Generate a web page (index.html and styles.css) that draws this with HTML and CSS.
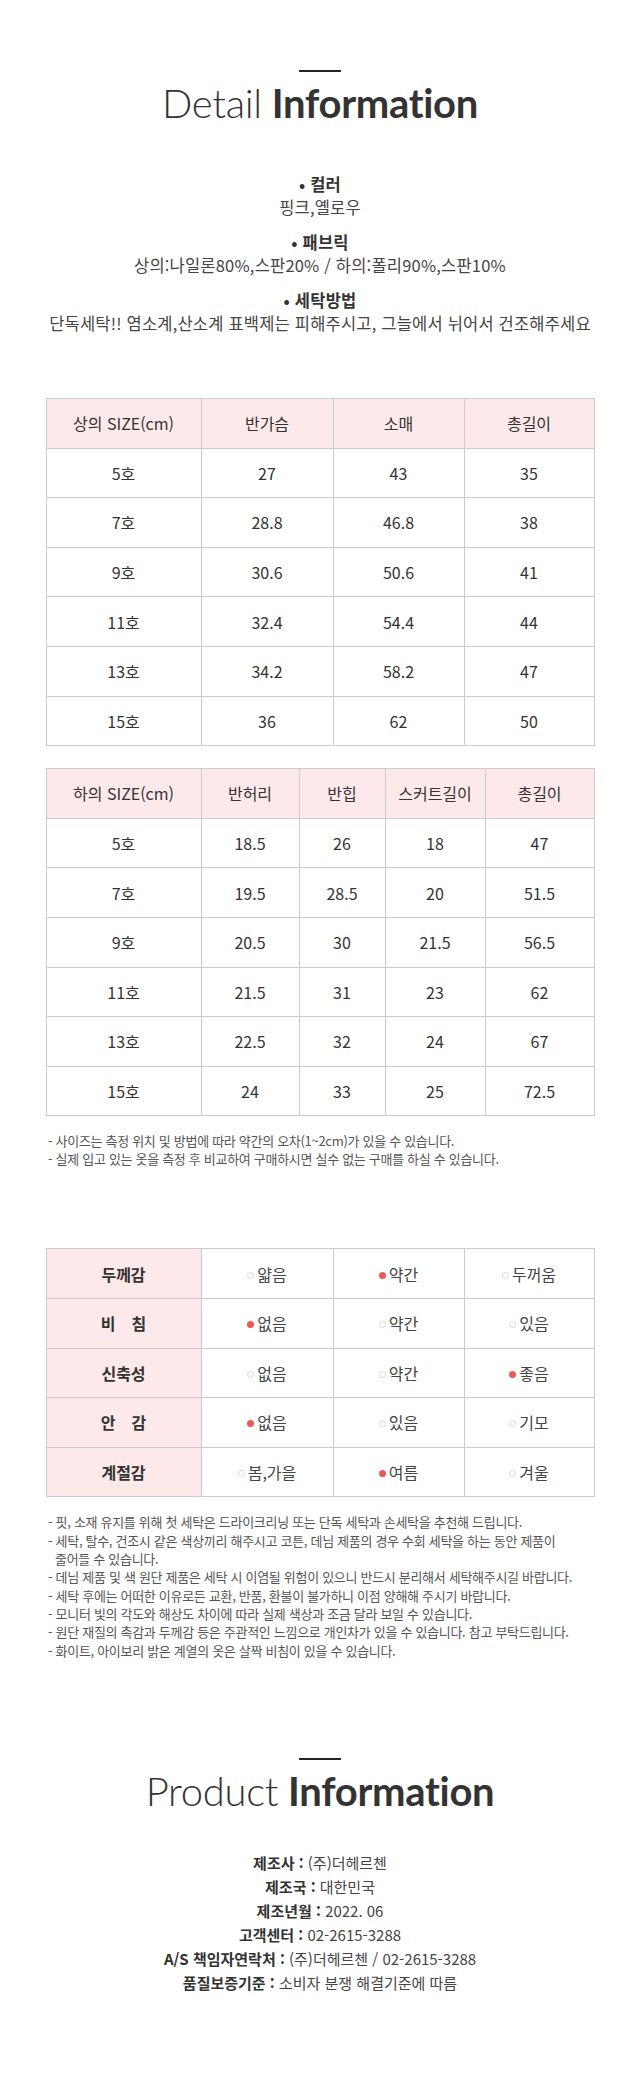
FILE: index.html
```html
<!DOCTYPE html>
<html lang="ko">
<head>
<meta charset="utf-8">
<title>Detail Information</title>
<link rel="stylesheet" href="styles.css">
</head>
<body>
<div class="page">
  <section class="detail">
    <div class="heading-line"></div>
    <h2 class="heading"><span class="light">Detail</span> <b>Information</b></h2>

    <div class="spec">
      <div class="spec-item">
        <div class="spec-title">• 컬러</div>
        <div class="spec-value">핑크,옐로우</div>
      </div>
      <div class="spec-item">
        <div class="spec-title">• 패브릭</div>
        <div class="spec-value">상의:나일론80%,스판20% / 하의:폴리90%,스판10%</div>
      </div>
      <div class="spec-item">
        <div class="spec-title">• 세탁방법</div>
        <div class="spec-value">단독세탁!! 염소계,산소계 표백제는 피해주시고, 그늘에서 뉘어서 건조해주세요</div>
      </div>
    </div>

    <table class="grid size-table top-table">
      <colgroup>
        <col class="c-first"><col class="c-t1"><col class="c-t2"><col class="c-t3">
      </colgroup>
      <tr class="head"><th>상의 SIZE(cm)</th><th>반가슴</th><th>소매</th><th>총길이</th></tr>
      <tr><td>5호</td><td>27</td><td>43</td><td>35</td></tr>
      <tr><td>7호</td><td>28.8</td><td>46.8</td><td>38</td></tr>
      <tr><td>9호</td><td>30.6</td><td>50.6</td><td>41</td></tr>
      <tr><td>11호</td><td>32.4</td><td>54.4</td><td>44</td></tr>
      <tr><td>13호</td><td>34.2</td><td>58.2</td><td>47</td></tr>
      <tr><td>15호</td><td>36</td><td>62</td><td>50</td></tr>
    </table>

    <table class="grid size-table bottom-table">
      <colgroup>
        <col class="c-first"><col class="c-b1"><col class="c-b2"><col class="c-b3"><col class="c-b4">
      </colgroup>
      <tr class="head"><th>하의 SIZE(cm)</th><th>반허리</th><th>반힙</th><th>스커트길이</th><th>총길이</th></tr>
      <tr><td>5호</td><td>18.5</td><td>26</td><td>18</td><td>47</td></tr>
      <tr><td>7호</td><td>19.5</td><td>28.5</td><td>20</td><td>51.5</td></tr>
      <tr><td>9호</td><td>20.5</td><td>30</td><td>21.5</td><td>56.5</td></tr>
      <tr><td>11호</td><td>21.5</td><td>31</td><td>23</td><td>62</td></tr>
      <tr><td>13호</td><td>22.5</td><td>32</td><td>24</td><td>67</td></tr>
      <tr><td>15호</td><td>24</td><td>33</td><td>25</td><td>72.5</td></tr>
    </table>

    <ul class="notes size-notes">
      <li>- 사이즈는 측정 위치 및 방법에 따라 약간의 오차(1~2cm)가 있을 수 있습니다.</li>
      <li>- 실제 입고 있는 옷을 측정 후 비교하여 구매하시면 실수 없는 구매를 하실 수 있습니다.</li>
    </ul>

    <table class="grid feel-table">
      <colgroup>
        <col class="c-first"><col class="c-t1"><col class="c-t2"><col class="c-t3">
      </colgroup>
      <tr><th>두께감</th><td><span class="dot off"></span>얇음</td><td><span class="dot on"></span>약간</td><td><span class="dot off"></span>두꺼움</td></tr>
      <tr><th>비　침</th><td><span class="dot on"></span>없음</td><td><span class="dot off"></span>약간</td><td><span class="dot off"></span>있음</td></tr>
      <tr><th>신축성</th><td><span class="dot off"></span>없음</td><td><span class="dot off"></span>약간</td><td><span class="dot on"></span>좋음</td></tr>
      <tr><th>안　감</th><td><span class="dot on"></span>없음</td><td><span class="dot off"></span>있음</td><td><span class="dot off"></span>기모</td></tr>
      <tr><th>계절감</th><td><span class="dot off"></span>봄,가을</td><td><span class="dot on"></span>여름</td><td><span class="dot off"></span>겨울</td></tr>
    </table>

    <ul class="notes care-notes">
      <li>- 핏, 소재 유지를 위해 첫 세탁은 드라이크리닝 또는 단독 세탁과 손세탁을 추천해 드립니다.</li>
      <li>- 세탁, 탈수, 건조시 같은 색상끼리 해주시고 코튼, 데님 제품의 경우 수회 세탁을 하는 동안 제품이<br>줄어들 수 있습니다.</li>
      <li>- 데님 제품 및 색 원단 제품은 세탁 시 이염될 위험이 있으니 반드시 분리해서 세탁해주시길 바랍니다.</li>
      <li>- 세탁 후에는 어떠한 이유로든 교환, 반품, 환불이 불가하니 이점 양해해 주시기 바랍니다.</li>
      <li>- 모니터 빛의 각도와 해상도 차이에 따라 실제 색상과 조금 달라 보일 수 있습니다.</li>
      <li>- 원단 재질의 촉감과 두께감 등은 주관적인 느낌으로 개인차가 있을 수 있습니다. 참고 부탁드립니다.</li>
      <li>- 화이트, 아이보리 밝은 계열의 옷은 살짝 비침이 있을 수 있습니다.</li>
    </ul>
  </section>

  <section class="product">
    <div class="heading-line"></div>
    <h2 class="heading"><span class="light">Product</span> <b>Information</b></h2>
    <div class="product-info">
      <p><b>제조사 :</b> (주)더헤르첸</p>
      <p><b>제조국 :</b> 대한민국</p>
      <p><b>제조년월 :</b> 2022. 06</p>
      <p><b>고객센터 :</b> 02-2615-3288</p>
      <p><b>A/S 책임자연락처 :</b> (주)더헤르첸 / 02-2615-3288</p>
      <p><b>품질보증기준 :</b> 소비자 분쟁 해결기준에 따름</p>
    </div>
  </section>
</div>
</body>
</html>
```

FILE: styles.css
```css
* { box-sizing: border-box; }

body {
  margin: 0;
  background: #fff;
  font-family: "Noto Sans CJK KR", "Noto Sans", sans-serif;
  color: #333;
}

.page {
  width: 640px;
  padding-bottom: 60px;
}

.heading-line {
  width: 42px;
  height: 2px;
  background: #222;
  margin: 70px auto 0;
}

.heading {
  margin: 11px 0 0;
  font-family: Lato, "Liberation Sans", sans-serif;
  font-size: 40px;
  line-height: 40px;
  font-weight: 400;
  text-align: center;
  color: #333;
  letter-spacing: -0.3px;
}

.heading .light { font-weight: 300; }
.heading b { font-weight: 700; }

/* spec */
.spec {
  margin-top: 50px;
  text-align: center;
  font-size: 16.5px;
  line-height: 23px;
  letter-spacing: 0.2px;
  color: #444;
}

.spec-item + .spec-item { margin-top: 12px; }

.spec-title {
  font-weight: 700;
  color: #333;
}

/* tables */
.grid {
  width: 548px;
  margin: 0 auto;
  border-collapse: collapse;
  table-layout: fixed;
}

.grid th,
.grid td {
  border: 1px solid #cccccc;
  height: 49.6px;
  padding: 0;
  text-align: center;
  vertical-align: middle;
  font-size: 16px;
  font-weight: 400;
  color: #333;
}

.grid .head th { background: #fde9e9; }

.c-first { width: 155px; }
.c-t1 { width: 132px; }
.c-t2 { width: 131px; }
.c-t3 { width: 130px; }

.c-b1 { width: 98px; }
.c-b2 { width: 86px; }
.c-b3 { width: 100px; }
.c-b4 { width: 109px; }

.top-table { margin-top: 63px; }
.bottom-table { margin-top: 22px; }

/* notes */
.notes {
  list-style: none;
  width: 566px;
  margin: 16px 0 0 46px;
  padding: 0 0 0 2px;
  font-size: 13px;
  line-height: 18px;
  color: #555;
  letter-spacing: -0.3px;
  word-break: keep-all;
}

.notes li {
  padding-left: 7px;
  text-indent: -7px;
}

.care-notes {
  margin-top: 16px;
  line-height: 18.35px;
}

/* feel table */
.feel-table { margin-top: 80px; }

.feel-table th {
  background: #fde9e9;
  font-weight: 700;
  color: #333;
}

.feel-table td {
  color: #444;
  font-size: 16px;
}

.dot {
  display: inline-block;
  width: 7px;
  height: 7px;
  border-radius: 50%;
  margin-right: 3px;
  vertical-align: 2px;
}

.dot.on { background: #f25656; }
.dot.off { border: 1px solid #d8d8d8; }

/* product */
.product .heading-line { margin-top: 98px; }

.product-info {
  margin-top: 40px;
  text-align: center;
  font-size: 15px;
  line-height: 24px;
  color: #444;
}

.product-info p { margin: 0; }
.product-info b { font-weight: 700; color: #333; }
```
